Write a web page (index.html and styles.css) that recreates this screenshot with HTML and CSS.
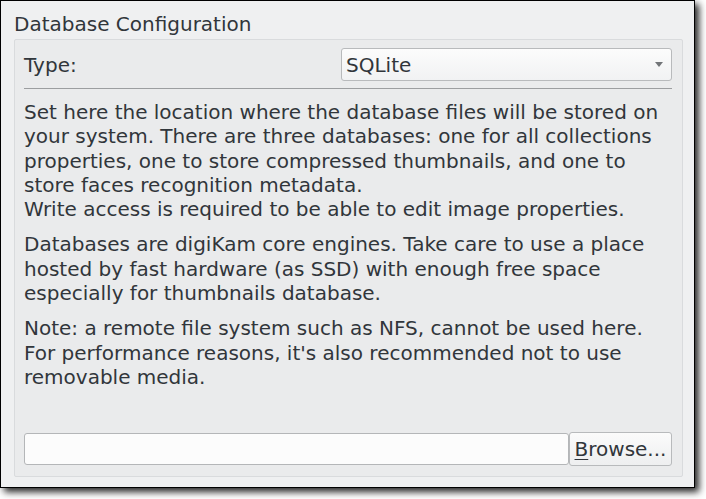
FILE: index.html
```html
<!DOCTYPE html>
<html>
<head>
<meta charset="utf-8">
<link rel="stylesheet" href="styles.css">
</head>
<body>
<div class="window">
  <div class="title">Database Configuration</div>
  <div class="group">
    <div class="type-row">
      <span class="label">Type:</span>
      <div class="combo"><span>SQLite</span><span class="arrow"></span></div>
    </div>
    <div class="sep"></div>
    <p class="para">Set here the location where the database files will be stored on your system. There are three databases: one for all collections properties, one to store compressed thumbnails, and one to store faces recognition metadata.<br>Write access is required to be able to edit image properties.</p>
    <p class="para">Databases are digiKam core engines. Take care to use a place hosted by fast hardware (as SSD) with enough free space especially for thumbnails database.</p>
    <p class="para">Note: a remote file system such as NFS, cannot be used here. For performance reasons, it's also recommended not to use removable media.</p>
    <div class="spacer"></div>
    <div class="path-row">
      <div class="input"></div>
      <div class="button"><u>B</u>rowse...</div>
    </div>
  </div>
</div>
</body>
</html>
```

FILE: styles.css
```css
html, body {
  margin: 0;
  padding: 0;
  background: #ffffff;
}
body {
  width: 706px;
  height: 499px;
  overflow: hidden;
  font-family: "DejaVu Sans", sans-serif;
  font-size: 20px;
  color: #31363b;
}
.window {
  box-sizing: border-box;
  width: 695px;
  height: 488px;
  border: 1px solid #000;
  background: #eff0f1;
  box-shadow: 4px 4px 7px rgba(0, 0, 0, 0.85);
  padding: 0 11px 0 13px;
  display: flex;
  flex-direction: column;
}
.title {
  height: 38px;
  line-height: 24px;
  padding-top: 11px;
  box-sizing: border-box;
}
.group {
  box-sizing: border-box;
  height: 438px;
  border: 1px solid #d9dbdd;
  border-radius: 2px;
  background: #eaebec;
  padding: 8px 10px 10px 9px;
  display: flex;
  flex-direction: column;
}
.type-row {
  display: flex;
  align-items: center;
  height: 33px;
}
.label {
  width: 317px;
}
.combo {
  box-sizing: border-box;
  flex: 1;
  height: 33px;
  border: 1px solid #b8babc;
  border-radius: 3px;
  background: linear-gradient(#fcfcfc, #f1f2f3);
  display: flex;
  align-items: center;
  justify-content: space-between;
  padding: 0 8px 0 4px;
}
.arrow {
  width: 0;
  height: 0;
  border-left: 4px solid transparent;
  border-right: 4px solid transparent;
  border-top: 5px solid #727578;
}
.sep {
  height: 1px;
  background: #9c9ea0;
  margin-top: 7px;
}
.para {
  margin: 11px 0 0 0;
  line-height: 24.3px;
}
.spacer {
  flex: 1;
}
.path-row {
  display: flex;
  align-items: center;
  height: 34px;
}
.input {
  box-sizing: border-box;
  flex: 1;
  height: 32px;
  border: 1px solid #b4b6b8;
  border-radius: 3px;
  background: #fcfcfc;
}
.button {
  box-sizing: border-box;
  width: 103px;
  height: 34px;
  border: 1px solid #b8babc;
  border-radius: 3px;
  background: linear-gradient(#fbfbfb, #eeeff0);
  display: flex;
  align-items: center;
  justify-content: center;
}
.button u {
  text-decoration-thickness: 1px;
  text-underline-offset: 3px;
}
```
